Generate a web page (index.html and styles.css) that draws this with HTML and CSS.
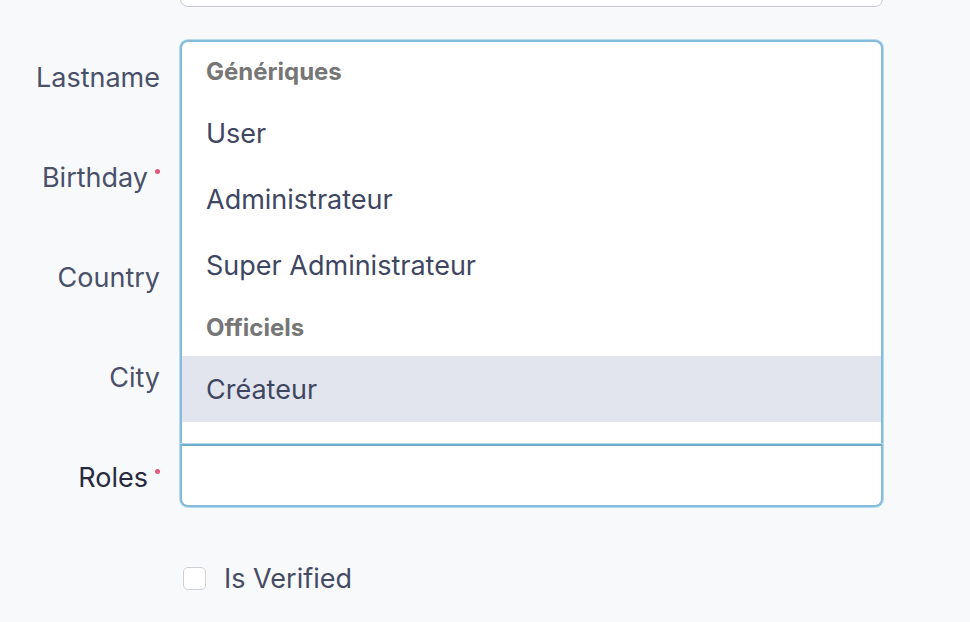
FILE: index.html
```html
<!DOCTYPE html>
<html lang="fr">
<head>
<meta charset="utf-8">
<title>Form</title>
<link rel="stylesheet" href="styles.css">
</head>
<body>
<form class="form">
  <div class="row">
    <label class="label"></label>
    <div class="input"></div>
  </div>
  <div class="row">
    <label class="label">Lastname</label>
    <div class="input"></div>
  </div>
  <div class="row">
    <label class="label">Birthday<span class="req"></span></label>
    <div class="input"></div>
  </div>
  <div class="row">
    <label class="label">Country</label>
    <div class="input"></div>
  </div>
  <div class="row">
    <label class="label">City</label>
    <div class="input"></div>
  </div>
  <div class="row">
    <label class="label label-focus">Roles<span class="req"></span></label>
    <div class="select">
      <div class="menu">
        <div class="group">Génériques</div>
        <div class="option">User</div>
        <div class="option">Administrateur</div>
        <div class="option">Super Administrateur</div>
        <div class="group">Officiels</div>
        <div class="option option-active">Créateur</div>
      </div>
      <div class="control"></div>
    </div>
  </div>
  <div class="row row-check">
    <span class="label"></span>
    <label class="check"><span class="box"></span><span class="check-text">Is Verified</span></label>
  </div>
</form>
</body>
</html>
```

FILE: styles.css
```css
html, body {
  margin: 0;
  padding: 0;
  height: 100%;
  overflow: hidden;
}
body {
  background: #f8f9fb;
  font-family: Inter, "Noto Sans", "Liberation Sans", sans-serif;
  color: #454b64;
}
.form {
  margin-top: -57px;
  display: flex;
  flex-direction: column;
  gap: 36px;
}
.row {
  display: grid;
  grid-template-columns: 160px 703px;
  column-gap: 20px;
  align-items: center;
  height: 64px;
}
.label {
  text-align: right;
  font-size: 27px;
  line-height: 1;
  padding-top: 4px;
  color: #4a5069;
  white-space: nowrap;
}
.label-focus {
  color: #272a3c;
}
.req {
  display: inline-block;
  width: 5px;
  height: 5px;
  border-radius: 50%;
  background: #dd5a7c;
  margin-left: 7px;
  vertical-align: 13px;
}
.input {
  height: 64px;
  box-sizing: border-box;
  background: #fff;
  border: 1px solid #c9cad1;
  border-radius: 8px;
}
.select {
  position: relative;
  height: 64px;
}
.control {
  height: 64px;
  box-sizing: border-box;
  background: #fff;
  border: 2px solid #86bcdb;
  border-top: 3px solid #6aadd0;
  border-radius: 0 0 8px 8px;
  box-shadow: 0 0 0 1px #b9daec;
}
.menu {
  position: absolute;
  left: 0;
  right: 0;
  bottom: 100%;
  height: 403px;
  box-sizing: border-box;
  background: #fff;
  border: 2px solid #86bcdb;
  border-bottom: none;
  border-radius: 8px 8px 0 0;
  box-shadow: 0 0 0 1px #b9daec;
  overflow: hidden;
}
.group {
  height: 58px;
  display: flex;
  align-items: center;
  padding-left: 24px;
  font-size: 24px;
  font-weight: 700;
  color: #767676;
}
.option {
  height: 66px;
  display: flex;
  align-items: center;
  padding-left: 24px;
  font-size: 27px;
  color: #3f4662;
}
.option-active {
  background: #e2e5ee;
}
.check {
  display: flex;
  align-items: center;
  gap: 18px;
  padding-left: 3px;
  padding-top: 6px;
}
.box {
  width: 23px;
  height: 23px;
  box-sizing: border-box;
  background: #fff;
  border: 1px solid #cfd0d5;
  border-radius: 5px;
}
.check-text {
  font-size: 27px;
  color: #454b64;
}
```
